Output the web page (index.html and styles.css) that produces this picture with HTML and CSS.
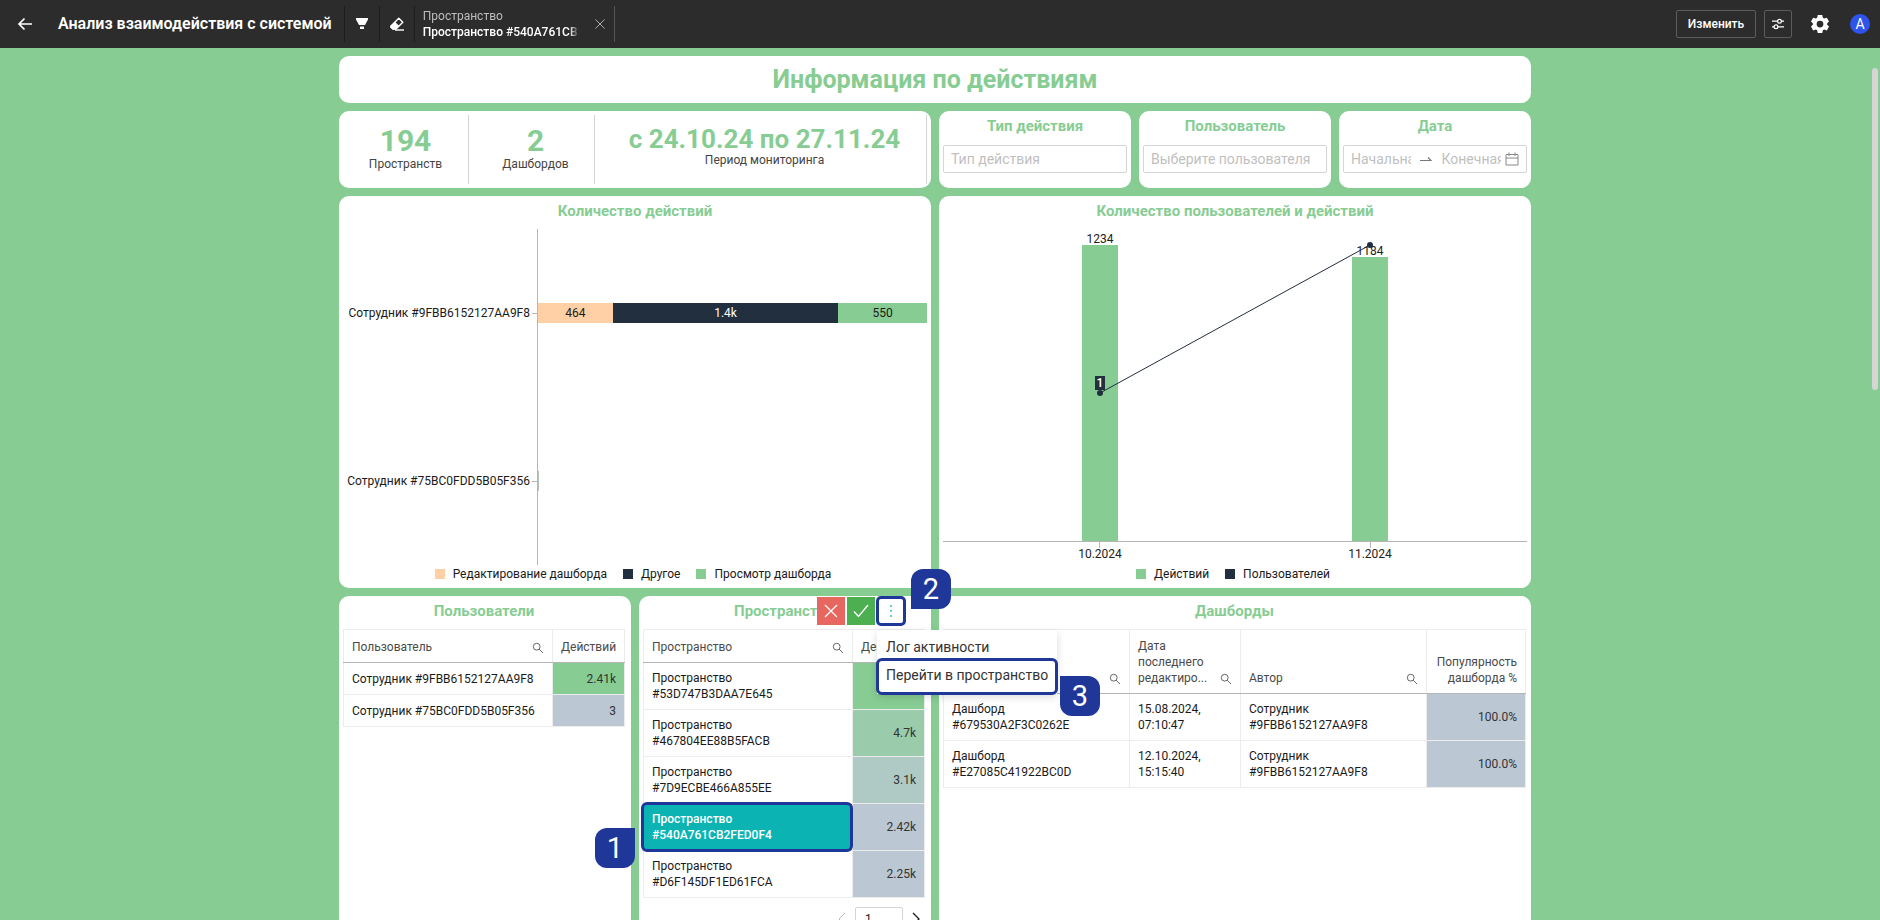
FILE: index.html
```html
<!DOCTYPE html>
<html lang="ru">
<head>
<meta charset="utf-8">
<title>Анализ взаимодействия с системой</title>
<link rel="stylesheet" href="styles.css">
</head>
<body>
<svg class="defs" aria-hidden="true">
  <symbol id="search" viewBox="0 0 12 12"><circle cx="4.7" cy="4.7" r="3.4" fill="none" stroke="currentColor"/><path d="M7.2 7.2 11 11" stroke="currentColor" fill="none"/></symbol>
</svg>
<header class="topbar">
  <button class="icon-btn back" aria-label="Назад"><svg width="16" height="14" viewBox="0 0 16 14"><path d="M15 7H2M7.500 1.500 2 7l5.500 5.500" fill="none" stroke="currentColor" stroke-width="1.700"/></svg></button>
  <h1 class="topbar-title">Анализ взаимодействия с системой</h1>
  <div class="tools">
    <button class="tool" aria-label="Фильтр"><svg width="14" height="14" viewBox="0 0 14 14"><path d="M1 1h12v1.500L10 8H4L1 2.500zM5 9.500h4V12H5z" fill="currentColor"/></svg></button>
    <button class="tool" aria-label="Очистить"><svg width="16" height="16" viewBox="0 0 16 16"><path d="M9.800 2.200 13.800 6.200 7 13H3.800L2 11.200V10z" fill="none" stroke="currentColor" stroke-width="1.400" stroke-linejoin="round"/><path d="M6 5.800 10.200 10 7 13.500H3.600L1.400 11.200V10z" fill="currentColor"/><path d="M6 14h9" stroke="currentColor" stroke-width="1.400"/></svg></button>
    <div class="filter-chip">
      <div class="chip-text"><span class="chip-name">Пространство</span><span class="chip-value">Пространство #540A761CB2FED0F4</span></div>
      <button class="icon-btn chip-close" aria-label="Удалить фильтр"><svg width="12" height="12" viewBox="0 0 12 12"><path d="m1.500 1.500 9 9m0-9-9 9" stroke="currentColor" fill="none"/></svg></button>
    </div>
  </div>
  <div class="actions">
    <button class="outline-btn">Изменить</button>
    <button class="outline-btn square" aria-label="Параметры"><svg width="12" height="12" viewBox="0 0 12 12"><g fill="none" stroke="currentColor" stroke-width="1.200"><path d="M0 3.200h5.500M9.500 3.200H12M0 8.800h2M6 8.800h6"/><circle cx="7.500" cy="3.200" r="1.900"/><circle cx="4" cy="8.800" r="1.900"/></g></svg></button>
    <button class="icon-btn gear" aria-label="Настройки"><svg width="18" height="18" viewBox="0 0 24 24"><path fill="currentColor" fill-rule="evenodd" d="M9 0h6l.8 3.600 1.800 1 3.500-1.100 3 5.200-2.700 2.500v1.600l2.700 2.500-3 5.200-3.500-1.100-1.800 1L15 24H9l-.8-3.600-1.800-1-3.500 1.100-3-5.200 2.700-2.500v-1.600L-.1 8.700l3-5.200 3.500 1.100 1.800-1zM12 7.500a4.500 4.500 0 1 0 0 9 4.500 4.500 0 0 0 0-9z"/></svg></button>
    <button class="avatar" aria-label="Профиль">A</button>
  </div>
</header>

<main class="viewport">
  <div class="board">
    <section class="card banner"><h2>Информация по действиям</h2></section>

    <section class="card kpis">
      <div class="kpi"><strong class="kpi-value">194</strong><span>Пространств</span></div>
      <div class="kpi"><strong class="kpi-value">2</strong><span>Дашбордов</span></div>
      <div class="kpi"><strong class="kpi-value period">с 24.10.24 по 27.11.24</strong><span>Период мониторинга</span></div>
    </section>
    <section class="card filter">
      <label class="card-title" for="action">Тип действия</label>
      <input class="field" id="action" type="text" placeholder="Тип действия">
    </section>
    <section class="card filter">
      <label class="card-title" for="user">Пользователь</label>
      <input class="field" id="user" type="text" placeholder="Выберите пользователя">
    </section>
    <section class="card filter">
      <label class="card-title" for="from">Дата</label>
      <div class="field range">
        <input id="from" type="text" placeholder="Начальная дата">
        <svg class="swap" width="12" height="12" viewBox="0 0 12 12"><path d="M0 7.500h11L8 4.500" fill="none" stroke="currentColor" stroke-width="1.200"/></svg>
        <input type="text" aria-label="Конечная дата" placeholder="Конечная дата">
        <svg class="calendar" width="14" height="14" viewBox="0 0 14 14"><path d="M1 2.500h12v10.500H1zM1 6h12M4 .5v3.500M10 .5v3.500" fill="none" stroke="currentColor"/></svg>
      </div>
    </section>

    <section class="card chart-card">
      <h3 class="card-title">Количество действий</h3>
      <div class="hchart">
        <div class="hlabels"><span>Сотрудник #9FBB6152127AA9F8</span><span>Сотрудник #75BC0FDD5B05F356</span></div>
        <div class="hplot">
          <div class="hrow"><div class="hbar"><span class="seg edit" style="flex-grow:464">464</span><span class="seg other" style="flex-grow:1400">1.4k</span><span class="seg view" style="flex-grow:550">550</span></div></div>
          <div class="hrow"><div class="hbar tiny"></div></div>
        </div>
      </div>
      <ul class="legend"><li class="edit">Редактирование дашборда</li><li class="other">Другое</li><li class="view">Просмотр дашборда</li></ul>
    </section>

    <section class="card chart-card">
      <h3 class="card-title">Количество пользователей и действий</h3>
      <svg class="vchart" viewBox="0 4 584 336" role="img" aria-label="Действия и пользователи по месяцам">
        <g fill="#87cd93"><rect x="139" y="20" width="36" height="296"/><rect x="409" y="32" width="36" height="284"/></g>
        <path d="M0 316.500h584M156.500 317v6M427.500 317v6" stroke="#b5b5b5" fill="none"/>
        <g class="chart-text"><text x="157" y="18">1234</text><text x="427" y="30">1184</text><text x="157" y="333">10.2024</text><text x="427" y="333">11.2024</text></g>
        <path d="M157 168 427 20" stroke="#222f3e" fill="none"/>
        <g fill="#222f3e"><circle cx="157" cy="168" r="3"/><circle cx="427" cy="20" r="3"/><rect x="152" y="151" width="10" height="14"/></g>
        <text class="point-text" x="157" y="162">1</text>
      </svg>
      <ul class="legend"><li class="view">Действий</li><li class="other">Пользователей</li></ul>
    </section>

    <section class="card table-card">
      <h3 class="card-title">Пользователи</h3>
      <table class="grid">
        <colgroup><col><col class="col-num"></colgroup>
        <thead><tr><th><div class="th"><span>Пользователь</span><svg width="12" height="12"><use href="#search"/></svg></div></th><th class="num">Действий</th></tr></thead>
        <tbody>
          <tr><td>Сотрудник #9FBB6152127AA9F8</td><td class="num heat-5">2.41k</td></tr>
          <tr><td>Сотрудник #75BC0FDD5B05F356</td><td class="num heat-1">3</td></tr>
        </tbody>
      </table>
    </section>

    <section class="card table-card spaces">
      <h3 class="card-title">Пространства</h3>
      <table class="grid">
        <colgroup><col><col class="col-num"></colgroup>
        <thead><tr><th><div class="th"><span>Пространство</span><svg width="12" height="12"><use href="#search"/></svg></div></th><th class="num">Действий</th></tr></thead>
        <tbody>
          <tr><td>Пространство<br>#53D747B3DAA7E645</td><td class="num heat-5"></td></tr>
          <tr><td>Пространство<br>#467804EE88B5FACB</td><td class="num heat-4">4.7k</td></tr>
          <tr><td>Пространство<br>#7D9ECBE466A855EE</td><td class="num heat-3">3.1k</td></tr>
          <tr><td class="selected">Пространство<br>#540A761CB2FED0F4<span class="step step-1">1</span></td><td class="num heat-1">2.42k</td></tr>
          <tr><td>Пространство<br>#D6F145DF1ED61FCA</td><td class="num heat-1">2.25k</td></tr>
        </tbody>
      </table>
      <div class="pager">
        <button class="icon-btn off" aria-label="Предыдущая"><svg width="10" height="14" viewBox="0 0 10 14"><path d="M8 1 2 7l6 6" fill="none" stroke="currentColor"/></svg></button>
        <input class="page" type="text" value="1" aria-label="Страница">
        <button class="icon-btn" aria-label="Следующая"><svg width="10" height="14" viewBox="0 0 10 14"><path d="m2 1 6 6-6 6" fill="none" stroke="currentColor" stroke-width="1.300"/></svg></button>
      </div>
      <div class="popup">
        <div class="popup-buttons">
          <button class="pb cancel" aria-label="Отменить"><svg width="14" height="14" viewBox="0 0 14 14"><path d="m1 1 12 12M13 1 1 13" stroke="currentColor" stroke-width="1.300"/></svg></button>
          <button class="pb apply" aria-label="Применить"><svg width="16" height="14" viewBox="0 0 16 14"><path d="m1 7.500 4.500 5L15 1" fill="none" stroke="currentColor" stroke-width="1.300"/></svg></button>
          <button class="pb more" aria-label="Ещё"><svg width="4" height="14" viewBox="0 0 4 14"><path d="M1 1h2v2H1zM1 6h2v2H1zM1 11h2v2H1z" fill="#5fd0cf"/></svg></button>
        </div>
        <span class="step step-2">2</span>
        <div class="menu">
          <button class="menu-item">Лог активности</button>
          <button class="menu-item marked">Перейти в пространство</button>
          <span class="step step-3">3</span>
        </div>
      </div>
    </section>

    <section class="card table-card wide">
      <h3 class="card-title">Дашборды</h3>
      <table class="grid">
        <colgroup><col class="col-name"><col class="col-date"><col><col class="col-pop"></colgroup>
        <thead><tr>
          <th><div class="th"><span>Дашборд</span><svg width="12" height="12"><use href="#search"/></svg></div></th>
          <th><div class="th"><span>Дата<br>последнего<br>редактиро...</span><svg width="12" height="12"><use href="#search"/></svg></div></th>
          <th><div class="th"><span>Автор</span><svg width="12" height="12"><use href="#search"/></svg></div></th>
          <th class="num">Популярность дашборда %</th>
        </tr></thead>
        <tbody>
          <tr><td>Дашборд<br>#679530A2F3C0262E</td><td>15.08.2024,<br>07:10:47</td><td>Сотрудник<br>#9FBB6152127AA9F8</td><td class="num heat-1">100.0%</td></tr>
          <tr><td>Дашборд<br>#E27085C41922BC0D</td><td>12.10.2024,<br>15:15:40</td><td>Сотрудник<br>#9FBB6152127AA9F8</td><td class="num heat-1">100.0%</td></tr>
        </tbody>
      </table>
    </section>
  </div>
  <div class="scroll-thumb"></div>
</main>
</body>
</html>
```
FILE: styles.css
```css
* { box-sizing: border-box; }
body { margin: 0; height: 100vh; display: flex; flex-direction: column; overflow: hidden; font: 12px/16px Roboto, "Liberation Sans", sans-serif; color: #1a1a1a; background: #87cd93; }
button, input { font: inherit; color: inherit; }
button { cursor: pointer; padding: 0; }
h1, h2, h3, ul { margin: 0; padding: 0; }
svg { display: block; flex: none; }
.defs { position: absolute; width: 0; height: 0; }

.topbar { flex: none; display: flex; align-items: center; height: 48px; padding: 0 10px 0 16px; background: #2c2c2c; color: #fff; }
.icon-btn { border: 0; background: none; display: flex; align-items: center; justify-content: center; }
.back { width: 18px; height: 32px; }
.topbar-title { margin-left: 24px; font-size: 16px; line-height: 24px; font-weight: 600; white-space: nowrap; }
.tools { display: flex; margin-left: 12px; height: 36px; }
.tool { width: 35px; border: 0; border-left: 1px solid #1c1c1c; background: none; display: flex; align-items: center; justify-content: center; }
.filter-chip { display: flex; align-items: center; width: 201px; padding-left: 8px; border-left: 1px solid #1c1c1c; border-right: 1px solid #555; }
.chip-text { width: 156px; overflow: hidden; white-space: nowrap; display: flex; flex-direction: column; mask-image: linear-gradient(90deg, #000 94%, transparent); }
.chip-name { color: #bdbdbd; }
.chip-value { font-weight: 500; }
.chip-close { margin-left: 15px; color: #aaa; }
.actions { margin-left: auto; display: flex; align-items: center; }
.outline-btn { height: 28px; width: 80px; border: 1px solid #5c5c5c; border-radius: 2px; background: none; font-weight: 500; }
.outline-btn.square { width: 28px; margin-left: 8px; display: flex; align-items: center; justify-content: center; }
.gear { width: 20px; height: 32px; margin-left: 18px; }
.avatar { width: 20px; height: 20px; margin-left: 20px; border: 0; border-radius: 50%; background: #2f54eb; font-size: 14px; }

.viewport { position: relative; flex: 1; min-height: 0; overflow: hidden; padding: 8px 10px 0 0; }
.scroll-thumb { position: absolute; top: 20px; right: 2px; width: 6px; height: 322px; border-radius: 3px; background: #d5d5d5; }
.board { display: grid; grid-template-columns: repeat(12, minmax(0, 1fr)); gap: 8px; max-width: 1192px; margin: 0 auto; }
.card { background: #fff; border-radius: 10px; min-width: 0; }
.card-title { display: block; text-align: center; font-size: 15px; line-height: 20px; font-weight: 700; color: #87cd93; }
.banner { grid-column: span 12; padding: 7px; text-align: center; color: #87cd93; }
.banner h2 { font-size: 25px; line-height: 33px; font-weight: 700; }

.kpis { grid-column: span 6; display: grid; grid-template-columns: 126fr 126fr 332fr; padding: 4px; }
.kpi { display: flex; flex-direction: column; align-items: center; padding-top: 11px; border-right: 1px solid #d5d5d5; color: #444; white-space: nowrap; }
.kpi + .kpi { padding-left: 8px; }
.kpi-value { font-size: 30px; line-height: 30px; font-weight: 700; color: #87cd93; }
.period { font-size: 26px; line-height: 26px; }
.filter { grid-column: span 2; padding: 5px 4px 15px; }
.field { display: flex; align-items: center; width: 100%; height: 28px; margin-top: 9px; padding: 0 7px; border: 1px solid #d5d5d5; border-radius: 2px; background: #fff; font-size: 14px; }
input::placeholder { color: #bfbfbf; opacity: 1; }
.range input { flex: 1; min-width: 0; width: 0; padding: 0; border: 0; background: none; }
.swap { margin: 0 10px 0 9px; color: #777; }
.calendar { margin-left: 4px; color: #888; }

.chart-card { grid-column: span 6; padding: 5px 4px 6px; }
.hchart { display: flex; height: 336px; margin-top: 8px; }
.hlabels { width: 194px; display: flex; flex-direction: column; }
.hlabels span { flex: 1; display: flex; align-items: center; justify-content: flex-end; white-space: nowrap; }
.hlabels span::after { content: ""; width: 5px; height: 1px; margin-left: 2px; background: #b5b5b5; }
.hplot { flex: 1; display: flex; flex-direction: column; border-left: 1px solid #b5b5b5; }
.hrow { flex: 1; display: flex; align-items: center; }
.hbar { flex: 1; display: flex; height: 20px; }
.hbar.tiny { flex: none; width: 1px; background: #b7c4bc; }
.seg { flex-basis: 0; display: flex; align-items: center; justify-content: center; }
.seg.edit { background: #ffcfa5; }
.seg.other { background: #222f3e; color: #fff; }
.seg.view { background: #87cd93; }
.legend { display: flex; justify-content: center; gap: 16px; margin-top: 1px; padding-right: 4px; list-style: none; }
.legend li { display: flex; align-items: center; gap: 8px; }
.legend li::before { content: ""; width: 10px; height: 10px; background: #87cd93; }
.legend li.edit::before { background: #ffcfa5; }
.legend li.other::before { background: #222f3e; }
.vchart { width: 100%; height: auto; margin-top: 8px; }
.chart-text { text-anchor: middle; fill: #222; }
.point-text { text-anchor: middle; fill: #fff; font-weight: 500; }

.table-card { grid-column: span 3; min-height: 560px; padding: 5px 6px 6px 4px; }
.table-card.wide { grid-column: span 6; padding-right: 5px; }
.grid { width: 100%; margin-top: 8px; table-layout: fixed; border-collapse: collapse; }
.col-num { width: 72px; }
.col-name { width: 186px; }
.col-date { width: 111px; }
.col-pop { width: 99px; }
.grid th, .grid td { padding: 7px 8px; border: 1px solid #ececec; text-align: left; }
.grid th { height: 33px; font-weight: 400; color: #4a4a4a; vertical-align: bottom; border-bottom: 1px solid #b5b5b5; padding: 8px 8px 7px; }
.grid tbody td { height: 32px; }
.grid .num { text-align: right; }
.grid td.num { color: #333; }
.th { display: flex; align-items: flex-end; justify-content: space-between; }
.th svg { margin-bottom: 1px; color: #666; }
.heat-5 { background: #87cd93; }
.heat-4 { background: #9acbab; }
.heat-3 { background: #afcac4; }
.heat-1 { background: #bbc7d3; }
.grid td.selected { position: relative; background: #0cb3b3; color: #fff; font-weight: 500; }
.selected::before { content: ""; position: absolute; inset: -2px -1px -2px -3px; border: 3px solid #1f3799; border-radius: 6px; }
.pager { display: flex; align-items: center; justify-content: flex-end; gap: 8px; margin-top: 9px; padding-right: 4px; }
.pager .off { color: #bbb; }
.page { width: 48px; height: 24px; border: 1px solid #d5d5d5; border-radius: 2px; padding: 0 9px; }

.spaces { position: relative; }
.popup { position: absolute; top: 1px; left: 178px; z-index: 2; }
.popup-buttons { display: flex; gap: 2px; }
.pb { width: 28px; height: 28px; border: 0; color: #fff; display: flex; align-items: center; justify-content: center; }
.cancel { background: #e7665f; }
.apply { background: #4caf50; }
.more { background: #fff; outline: 3px solid #1f3799; outline-offset: -2px; border-radius: 4px; }
.menu { position: absolute; top: 33px; left: 60px; width: 180px; padding-top: 5px; background: #fff; box-shadow: 0 3px 8px rgba(0, 0, 0, .15); }
.menu-item { display: block; width: 100%; height: 24px; padding: 0 9px; border: 0; background: none; text-align: left; font-size: 14px; color: #333; white-space: nowrap; }
.menu-item.marked { height: 35px; padding-bottom: 3px; outline: 3px solid #1f3799; outline-offset: -2px; border-radius: 5px; }
.step { position: absolute; width: 40px; height: 40px; background: #1f3799; color: #fff; font-size: 29px; line-height: 40px; font-weight: 400; text-align: center; border-radius: 12px; }
.step-1 { left: -49px; top: 24px; border-top-right-radius: 0; }
.step-2 { left: 94px; top: -28px; border-bottom-left-radius: 0; }
.step-3 { left: 183px; top: 46px; border-top-left-radius: 0; }
```
